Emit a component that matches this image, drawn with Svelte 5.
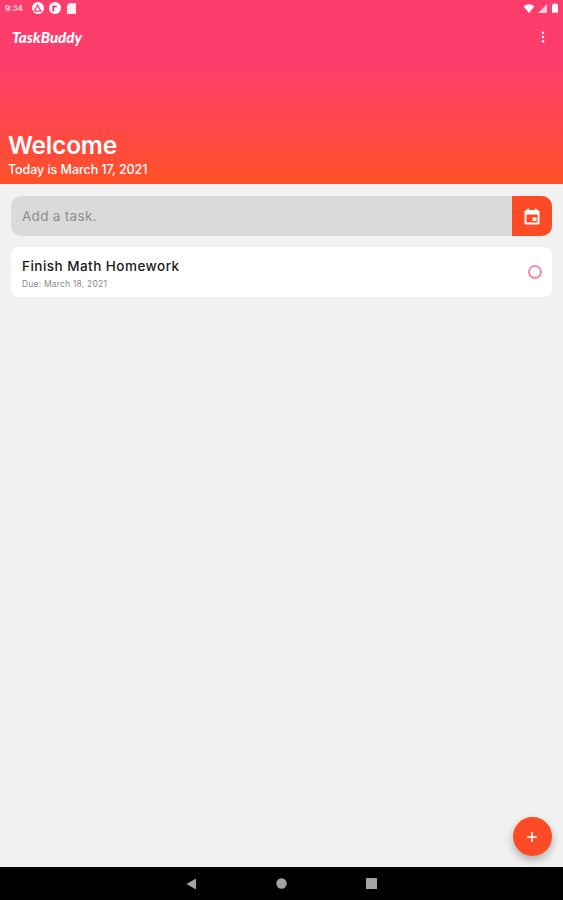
<script>
	let title = 'Finish Math Homework';
	let due = 'Due: March 18, 2021';
</script>

<div class="page">
	<header class="hero">
		<div class="status">
			<span class="time">9:34</span>
			<span class="dot">
				<svg viewBox="0 0 12 12" width="9" height="9"><path d="M6 1.500 10.500 9.500H1.500Z" fill="none" stroke="#ff3d6b" stroke-width="1.600" /></svg>
			</span>
			<span class="dot">
				<svg viewBox="0 0 12 12" width="9" height="9"><path d="M3 2h6v2.500H5.500V10H3Z" fill="#ff3d6b" /></svg>
			</span>
			<svg class="sd" viewBox="0 0 9 11" width="9" height="11"><path d="M2.500 0H9V11H0V2.500Z" fill="#fff" fill-opacity=".92" /></svg>
			<span class="grow"></span>
			<svg viewBox="0 0 12 10" width="12" height="9"><path d="M0 2.500Q6-2 12 2.500L6 10Z" fill="#fff" /></svg>
			<svg class="signal" viewBox="0 0 10 10" width="9" height="9"><path d="M10 0V10H0Z" fill="#fff" fill-opacity=".75" /></svg>
			<svg class="battery" viewBox="0 0 7 11" width="6" height="10"><path d="M2 0H5V1H7V11H0V1H2Z" fill="#fff" /></svg>
		</div>
		<div class="toolbar">
			<span class="logo">TaskBuddy</span>
			<svg class="more" viewBox="0 0 4 14" width="4" height="12">
				<circle cx="2" cy="2" r="1.400" />
				<circle cx="2" cy="7" r="1.400" />
				<circle cx="2" cy="12" r="1.400" />
			</svg>
		</div>
		<div class="greeting">
			<h1>Welcome</h1>
			<p>Today is March 17, 2021</p>
		</div>
	</header>

	<main class="content">
		<div class="add">
			<span class="placeholder">Add a task.</span>
			<button class="date" aria-label="Pick date">
				<svg viewBox="0 0 16 17" width="16" height="17">
					<path d="M3.500 0.500H5V2H11V0.500H12.500V2H14A1.500 1.500 0 0 1 15.500 3.500V15A1.500 1.500 0 0 1 14 16.500H2A1.500 1.500 0 0 1 0.500 15V3.500A1.500 1.500 0 0 1 2 2H3.500ZM2.500 6.500V14.500H13.500V6.500Z" fill="#fff" fill-rule="evenodd" />
					<rect x="8.500" y="9.500" width="4" height="3.500" fill="#fff" />
				</svg>
			</button>
		</div>

		<div class="task">
			<div class="task-text">
				<span class="task-title">{title}</span>
				<span class="task-due">{due}</span>
			</div>
			<span class="ring"></span>
		</div>
	</main>

	<button class="fab" aria-label="Add task">
		<svg viewBox="0 0 10 10" width="10" height="10"><path d="M4.200 0H5.800V4.200H10V5.800H5.800V10H4.200V5.800H0V4.200H4.200Z" fill="#fff" /></svg>
	</button>

	<nav class="nav">
		<svg viewBox="0 0 12 13" width="11" height="12"><path d="M11 0.500V12.500L0.500 6.500Z" fill="#a3a3a3" /></svg>
		<svg viewBox="0 0 11 11" width="11" height="11"><circle cx="5.500" cy="5.500" r="5.200" fill="#a3a3a3" /></svg>
		<svg viewBox="0 0 11 11" width="11" height="11"><rect width="11" height="11" rx="0.500" fill="#a3a3a3" /></svg>
	</nav>
</div>

<style>
	:global(body) {
		margin: 0;
	}

	.page {
		position: relative;
		display: flex;
		flex-direction: column;
		width: 563px;
		height: 900px;
		overflow: hidden;
		background: #f1f1f1;
		font-family: Inter, 'Noto Sans', sans-serif;
	}

	.hero {
		display: flex;
		flex-direction: column;
		box-sizing: border-box;
		height: 184px;
		padding-bottom: 5px;
		background: linear-gradient(180deg, #ff3d6c 0%, #ff3d6c 35%, #ff5128 100%);
		color: #fff;
	}

	.status {
		display: flex;
		align-items: center;
		gap: 5px;
		height: 16px;
		padding: 0 5px;
		font-size: 8px;
		line-height: 16px;
	}

	.time {
		margin-right: 4px;
		font-weight: 500;
		opacity: 0.9;
	}

	.dot {
		display: flex;
		align-items: center;
		justify-content: center;
		width: 12px;
		height: 12px;
		border-radius: 50%;
		background: #fff;
	}

	.sd {
		margin-left: 1px;
	}

	.grow {
		flex: 1;
	}

	.signal {
		margin-left: -2px;
	}

	.toolbar {
		display: flex;
		align-items: center;
		justify-content: space-between;
		height: 44px;
		padding: 0 18px 0 12px;
	}

	.logo {
		font-family: Lato, sans-serif;
		font-size: 15px;
		font-weight: 900;
		font-style: italic;
		letter-spacing: 0.05px;
		transform: translateY(-1px);
	}

	.more {
		fill: #fff;
		transform: translateY(-1px);
	}

	.greeting {
		margin-top: auto;
		padding-left: 8px;
	}

	h1 {
		margin: 0 0 1px;
		font-size: 24.500px;
		font-weight: 600;
		line-height: 30px;
		letter-spacing: -0.2px;
	}

	.greeting p {
		margin: 0;
		font-size: 12.500px;
		font-weight: 500;
		line-height: 18px;
		letter-spacing: -0.06px;
	}

	.content {
		display: flex;
		flex-direction: column;
		gap: 11px;
		padding: 12px 11px 0;
	}

	.add {
		display: flex;
		align-items: stretch;
		height: 40px;
		overflow: hidden;
		border-radius: 10px;
		background: #dadada;
	}

	.placeholder {
		flex: 1;
		padding-left: 11px;
		color: #8e8e8e;
		font-size: 13.500px;
		line-height: 40px;
		letter-spacing: 0.3px;
	}

	.date {
		display: flex;
		align-items: center;
		justify-content: center;
		width: 40px;
		padding: 0;
		border: 0;
		background: #ff4a26;
	}

	.task {
		display: flex;
		align-items: center;
		justify-content: space-between;
		height: 50px;
		padding: 0 10px 0 11px;
		border-radius: 8px;
		background: #fff;
	}

	.task-text {
		display: flex;
		flex-direction: column;
		gap: 4px;
		padding-top: 3px;
	}

	.task-title {
		color: #1a1a1a;
		font-size: 13.500px;
		font-weight: 500;
		line-height: 17px;
		letter-spacing: 0.47px;
	}

	.task-due {
		color: #8a8a8a;
		font-size: 8.500px;
		line-height: 11px;
		letter-spacing: 0.2px;
	}

	.ring {
		box-sizing: border-box;
		width: 14px;
		height: 14px;
		border: 2px solid #f78aa8;
		border-radius: 50%;
	}

	.fab {
		position: absolute;
		right: 11px;
		bottom: 44px;
		display: flex;
		align-items: center;
		justify-content: center;
		width: 39px;
		height: 39px;
		padding: 0 2px 0 0;
		border: 0;
		border-radius: 50%;
		background: #ff4a26;
		box-shadow: 0 4px 8px rgba(0, 0, 0, 0.28);
	}

	.nav {
		display: flex;
		align-items: center;
		justify-content: center;
		gap: 79px;
		box-sizing: border-box;
		height: 33px;
		margin-top: auto;
		background: #000;
	}
</style>
